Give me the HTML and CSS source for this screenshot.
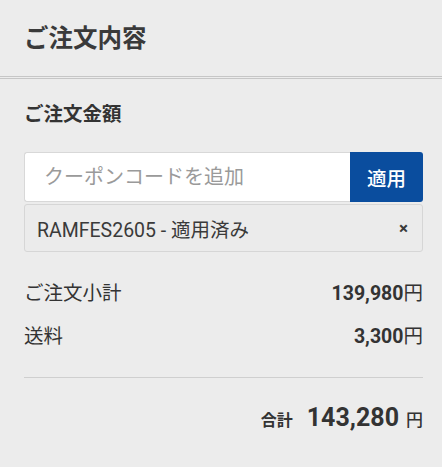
FILE: index.html
```html
<!DOCTYPE html>
<html lang="ja">
<head>
  <meta charset="UTF-8">
  <meta name="viewport" content="width=device-width, initial-scale=1">
  <title>ご注文内容</title>
  <link rel="stylesheet" href="styles.css">
</head>
<body>

<div class="order-summary">
  <div class="order-header">ご注文内容</div>

  <div class="order-body">
    <div class="order-title">ご注文金額</div>

    <div class="coupon-form">
      <input type="text" class="coupon-input" placeholder="クーポンコードを追加">
      <button class="coupon-btn">適用</button>
    </div>

    <div class="coupon-applied">
      <span>RAMFES2605 - 適用済み</span>
      <span class="coupon-remove">×</span>
    </div>

    <div class="price-row">
      <span>ご注文小計</span>
      <span class="price">139,980<span class="yen">円</span></span>
    </div>
    <div class="price-row">
      <span>送料</span>
      <span class="price">3,300<span class="yen">円</span></span>
    </div>

    <div class="total-row">
      <span class="total-label">合計</span>
      <span class="total-value">143,280</span>
      <span class="total-yen">円</span>
    </div>
  </div>
</div>

</body>
</html>
```

FILE: styles.css
```css
body {
  margin: 0;
  padding: 0;
  background: #ececec;
  font-family: Roboto, "Noto Sans CJK JP", sans-serif;
  color: #333;
}

.order-summary {
  width: 442px;
}

.order-header {
  height: 79px;
  box-sizing: border-box;
  display: flex;
  align-items: center;
  padding: 0 24px 3px;
  font-size: 24.5px;
  font-weight: bold;
  color: #3a3a3a;
  border-bottom: 3px double #c6c6c6;
}

.order-body {
  padding: 22px 19px 30px 24px;
}

.order-title {
  font-size: 19.5px;
  font-weight: bold;
  line-height: 28px;
  margin-bottom: 23px;
}

.coupon-form {
  display: flex;
  height: 50px;
}

.coupon-input {
  flex: 1;
  min-width: 0;
  border: 1px solid #d8d8d8;
  border-right: none;
  border-radius: 3px 0 0 3px;
  background: #fff;
  padding: 0 19px;
  font-family: Roboto, "Noto Sans CJK JP", sans-serif;
  font-size: 20px;
  color: #333;
  outline: none;
}

.coupon-input::placeholder {
  color: #9a9a9a;
}

.coupon-btn {
  width: 73px;
  border: none;
  border-radius: 0 3px 3px 0;
  background: #0a4d9e;
  color: #fff;
  font-family: Roboto, "Noto Sans CJK JP", sans-serif;
  font-size: 19.5px;
  font-weight: 500;
  cursor: pointer;
}

.coupon-applied {
  margin-top: 2px;
  height: 48px;
  box-sizing: border-box;
  display: flex;
  align-items: center;
  justify-content: space-between;
  padding: 0 12px;
  border: 1px solid #d6d6d6;
  border-radius: 3px;
  background: #ebebeb;
  font-size: 19.5px;
  color: #3a3a3a;
}

.coupon-remove {
  font-size: 17px;
  font-weight: bold;
  padding-right: 2px;
}

.price-row {
  display: flex;
  justify-content: space-between;
  align-items: center;
  font-size: 19.5px;
  line-height: 28px;
  margin-top: 15px;
}

.coupon-applied + .price-row {
  margin-top: 28px;
}

.price {
  font-weight: bold;
}

.yen {
  font-weight: normal;
}

.total-row {
  margin-top: 26px;
  border-top: 1px solid #cfcfcf;
  padding-top: 25px;
  display: flex;
  justify-content: flex-end;
  align-items: baseline;
  font-weight: bold;
}

.total-label {
  font-size: 16px;
  margin-right: 14px;
}

.total-value {
  font-size: 25px;
  margin-right: 7px;
}

.total-yen {
  font-size: 17px;
  font-weight: 500;
}
```
